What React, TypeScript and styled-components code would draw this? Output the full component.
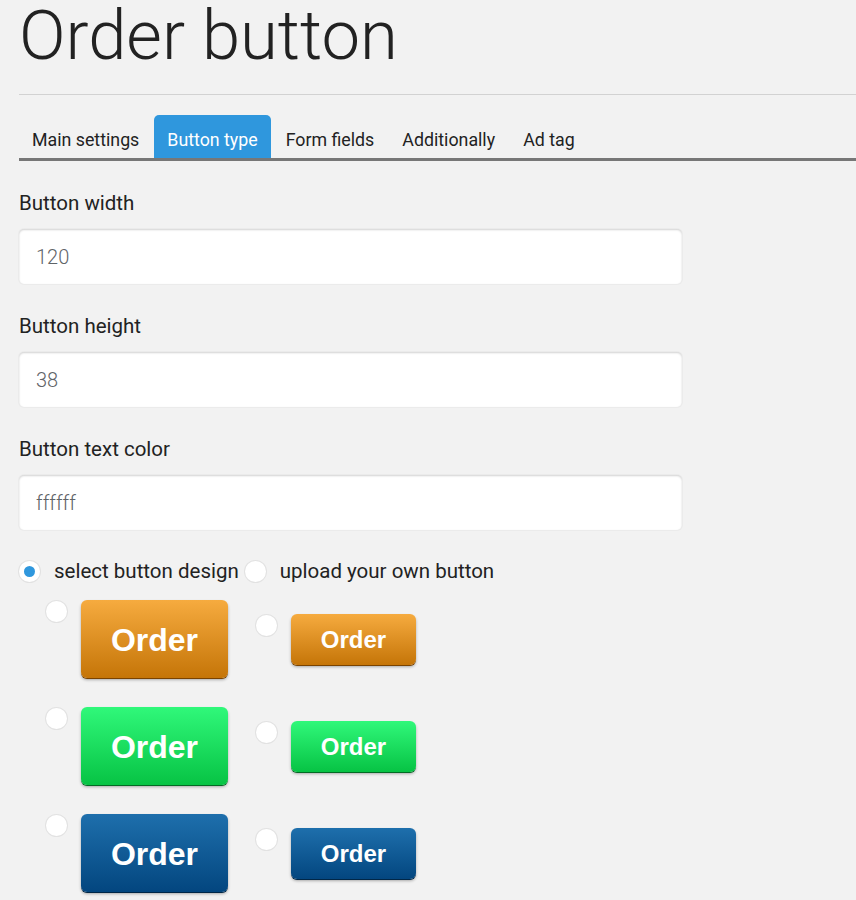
import React from 'react';
import styled, { createGlobalStyle } from 'styled-components';

const GlobalStyle = createGlobalStyle`
  html, body {
    margin: 0;
    padding: 0;
    background: #f2f2f2;
  }
  body {
    font-family: Roboto, "Liberation Sans", Arial, sans-serif;
    color: #222;
  }
`;

type Palette = { top: string; bottom: string; edge: string };

const palettes: Record<string, Palette> = {
  orange: { top: '#f6ab3f', bottom: '#c57508', edge: '#7a4300' },
  green: { top: '#30f87a', bottom: '#07c344', edge: '#036b24' },
  blue: { top: '#1e6fac', bottom: '#03467f', edge: '#012747' },
};

const Page = styled.div`
  padding: 0 0 40px 19px;
`;

const Title = styled.h1`
  margin: 0;
  padding-top: 1px;
  font-size: 68.8px;
  line-height: 70px;
  font-weight: 300;
  color: #222;
`;

const Divider = styled.hr`
  margin: 23px 0 0;
  border: none;
  height: 1px;
  background: #d2d2d2;
`;

const Tabs = styled.div`
  display: flex;
  gap: 2px;
  margin-top: 20px;
  border-bottom: 3px solid #777;
`;

const Tab = styled.div<{ $active?: boolean }>`
  height: 43px;
  line-height: 50px;
  padding: 0 13px;
  font-size: 17.8px;
  border-radius: 5px 5px 0 0;
  color: ${({ $active }) => ($active ? '#fff' : '#222')};
  background: ${({ $active }) => ($active ? '#2f97dd' : 'transparent')};
`;

const Field = styled.div`
  margin-top: 30px;
  width: 663px;
`;

const Label = styled.label`
  display: block;
  font-size: 20.5px;
  line-height: 24px;
  margin-bottom: 14px;
`;

const Input = styled.input`
  display: block;
  box-sizing: border-box;
  width: 100%;
  height: 55px;
  padding: 0 17px;
  border: none;
  border-radius: 5px;
  background: #fff;
  box-shadow: inset 0 1px 2px rgba(0, 0, 0, 0.18), 0 0 0 1px #ebebeb;
  font-family: Roboto, "Liberation Sans", sans-serif;
  font-size: 20px;
  font-weight: 300;
  color: #5f6468;
  outline: none;
`;

const ChoiceRow = styled.div`
  display: flex;
  align-items: center;
  margin-top: 29px;
  height: 24px;
`;

const Radio = styled.span<{ $checked?: boolean }>`
  position: relative;
  flex: none;
  width: 21px;
  height: 21px;
  border-radius: 50%;
  background: #fff;
  box-shadow: 0 0 0 1px #e2e2e2;
  &::after {
    content: '';
    display: ${({ $checked }) => ($checked ? 'block' : 'none')};
    position: absolute;
    left: 5px;
    top: 5px;
    width: 11px;
    height: 11px;
    border-radius: 50%;
    background: #2f97dd;
  }
`;

const ChoiceLabel = styled.span`
  font-size: 20.5px;
  margin: 0 6px 0 14px;
`;

const Grid = styled.div`
  display: flex;
  flex-direction: column;
  gap: 29px;
  margin-top: 17px;
  padding-left: 27px;
`;

const GridRow = styled.div`
  display: flex;
  align-items: center;
  gap: 28px;
`;

const Cell = styled.div`
  display: flex;
  align-items: flex-start;
  gap: 14px;
  ${Radio} {
    margin-top: 1px;
  }
`;

const OrderButton = styled.div<{ $palette: Palette; $big?: boolean }>`
  width: ${({ $big }) => ($big ? '147px' : '125px')};
  height: ${({ $big }) => ($big ? '78px' : '51px')};
  display: flex;
  align-items: center;
  justify-content: center;
  padding-top: 2px;
  box-sizing: border-box;
  border-radius: 6px;
  background: linear-gradient(${({ $palette }) => $palette.top}, ${({ $palette }) => $palette.bottom});
  box-shadow: 0 1px 0 ${({ $palette }) => $palette.edge}, 0 2px 3px rgba(0, 0, 0, 0.3);
  color: #fff;
  font-family: "Liberation Sans", Arial, sans-serif;
  font-weight: bold;
  font-size: ${({ $big }) => ($big ? '32px' : '24px')};
`;

export default function App() {
  const tabs = ['Main settings', 'Button type', 'Form fields', 'Additionally', 'Ad tag'];
  const fields = [
    { label: 'Button width', value: '120' },
    { label: 'Button height', value: '38' },
    { label: 'Button text color', value: 'ffffff' },
  ];

  return (
    <Page>
      <GlobalStyle />
      <Title>Order button</Title>
      <Divider />
      <Tabs>
        {tabs.map((t) => (
          <Tab key={t} $active={t === 'Button type'}>
            {t}
          </Tab>
        ))}
      </Tabs>
      {fields.map((f) => (
        <Field key={f.label}>
          <Label>{f.label}</Label>
          <Input defaultValue={f.value} />
        </Field>
      ))}
      <ChoiceRow>
        <Radio $checked />
        <ChoiceLabel>select button design</ChoiceLabel>
        <Radio />
        <ChoiceLabel>upload your own button</ChoiceLabel>
      </ChoiceRow>
      <Grid>
        {['orange', 'green', 'blue'].map((c) => (
          <GridRow key={c}>
            <Cell>
              <Radio />
              <OrderButton $palette={palettes[c]} $big>
                Order
              </OrderButton>
            </Cell>
            <Cell>
              <Radio />
              <OrderButton $palette={palettes[c]}>Order</OrderButton>
            </Cell>
          </GridRow>
        ))}
      </Grid>
    </Page>
  );
}
